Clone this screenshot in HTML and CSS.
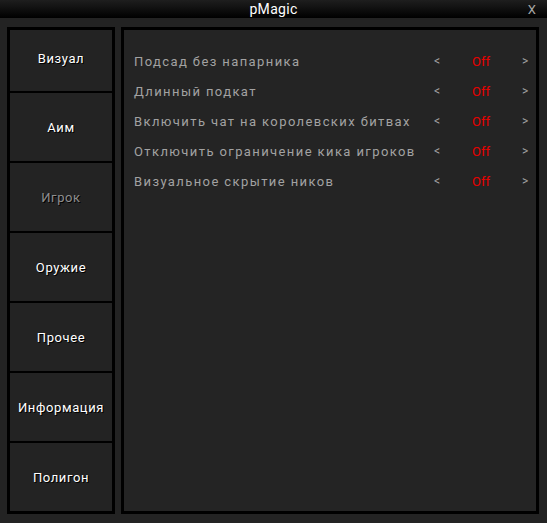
FILE: index.html
```html
<html>
  <head>
    <title>pMagic</title>
    <link rel="stylesheet" href="styles.css">
  </head>

  <body>
    <header class="titlebar">
      <span></span>
      <span class="title">pMagic</span>
      <span class="close">X</span>
    </header>

    <main class="window">
      <aside class="tabs">
        <a class="tab first">Визуал</a>
        <a class="tab">Аим</a>
        <a class="tab active">Игрок</a>
        <a class="tab">Оружие</a>
        <a class="tab">Прочее</a>
        <a class="tab">Информация</a>
        <a class="tab">Полигон</a>
      </aside>

      <section class="options">
        <div class="option">
          <span class="label">Подсад без напарника</span>
          <span class="lt">&lt;</span>
          <span class="val">Off</span>
          <span class="gt">&gt;</span>
        </div>
        <div class="option">
          <span class="label">Длинный подкат</span>
          <span class="lt">&lt;</span>
          <span class="val">Off</span>
          <span class="gt">&gt;</span>
        </div>
        <div class="option">
          <span class="label">Включить чат на королевских битвах</span>
          <span class="lt">&lt;</span>
          <span class="val">Off</span>
          <span class="gt">&gt;</span>
        </div>
        <div class="option">
          <span class="label">Отключить ограничение кика игроков</span>
          <span class="lt">&lt;</span>
          <span class="val">Off</span>
          <span class="gt">&gt;</span>
        </div>
        <div class="option">
          <span class="label">Визуальное скрытие ников</span>
          <span class="lt">&lt;</span>
          <span class="val">Off</span>
          <span class="gt">&gt;</span>
        </div>
      </section>
    </main>
  </body>
</html>
```

FILE: styles.css
```css
body {
  margin: 0;
  height: 523px;
  background-color: #232323;
  font-family: "Roboto", "Liberation Sans", sans-serif;
  overflow: hidden;
}

.titlebar {
  height: 18px;
  display: grid;
  grid-template-columns: 1fr auto 1fr;
  align-items: center;
  background: linear-gradient(#1e1e1e, #000);

  & .title {
    color: #fff;
    font-size: 14px;
    letter-spacing: 0.3px;
  }

  & .close {
    justify-self: end;
    padding-right: 11px;
    color: #a8a8a8;
    font-size: 13px;
  }
}

.window {
  display: flex;
  gap: 6px;
  padding: 9px 8px 9px 7px;
  height: 487px;
}

.tabs {
  width: 102px;
  display: flex;
  flex-direction: column;
  gap: 2px;
  background-color: #000;
  border: 3px solid #000;

  & .tab {
    height: 68px;
    display: flex;
    align-items: center;
    justify-content: center;
    background-color: #232323;
    color: #fff;
    font-size: 13px;
    letter-spacing: 0.6px;
    text-shadow: 1px 1px 0 #000;
  }

  & .first {
    height: 61px;
    padding-bottom: 4px;
    box-sizing: border-box;
  }

  & .active {
    color: #8e8e8e;
  }
}

.options {
  flex-grow: 1;
  border: 3px solid #000;
  background-color: #242424;
  padding: 16px 8px 0 10px;

  & .option {
    display: flex;
    align-items: center;
    height: 30px;
    color: #a2a2a2;
    font-size: 13px;
    letter-spacing: 1.4px;
  }

  & .label {
    flex-grow: 1;
  }

  & .lt,
  & .gt {
    width: 6px;
    font-size: 12px;
    letter-spacing: 0;
  }

  & .lt {
    margin-right: 6px;
  }

  & .val {
    width: 70px;
    text-align: center;
    color: #e80000;
    letter-spacing: 0;
    margin-right: 6px;
  }
}
```
